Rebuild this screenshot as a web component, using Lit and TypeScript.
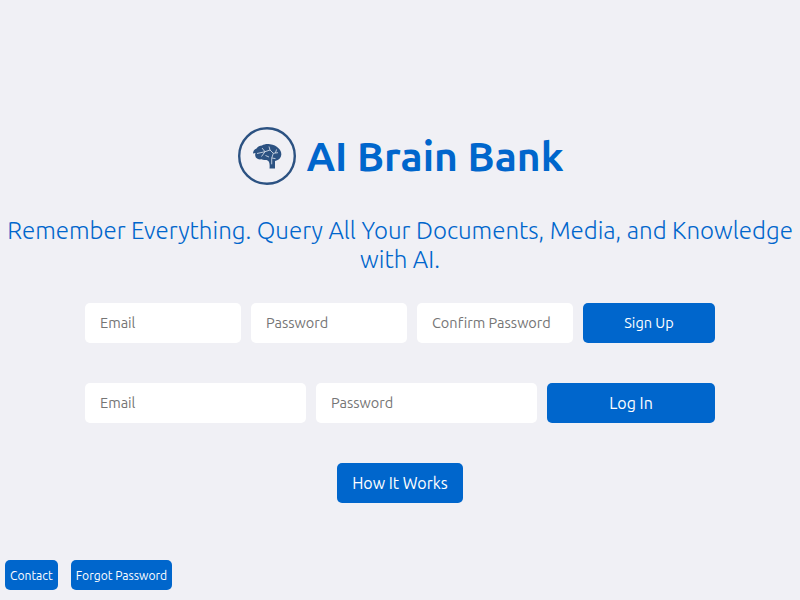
import { LitElement, html, css } from "lit";
import { customElement } from "lit/decorators.js";

@customElement("app-root")
export class AppRoot extends LitElement {
  static styles = css`
    :host {
      display: flex;
      flex-direction: column;
      height: 600px;
      background: #f0f0f5;
      font-family: Ubuntu, "Noto Sans", "Open Sans", sans-serif;
      overflow: hidden;
      font-variant-ligatures: none;
    }
    .main {
      padding-top: 127px;
      display: flex;
      flex-direction: column;
      align-items: center;
    }
    .brand {
      display: flex;
      align-items: center;
      gap: 10px;
      height: 58px;
      margin-left: 2px;
    }
    .logo { width: 58px; height: 58px; display: block; }
    h1 {
      margin: 0;
      font-size: 40.8px;
      font-weight: 700;
      color: #0066cc;
      line-height: 58px;
    }
    .tag {
      margin: 32px 0 0;
      width: 800px;
      text-align: center;
      font-size: 24.1px;
      font-weight: 300;
      line-height: 28.8px;
      color: #0066cc;
    }
    .row {
      display: flex;
      gap: 10px;
      width: 630px;
      margin-top: 40px;
    }
    .row.first { margin-top: 28.4px; }
    input {
      flex: 1 1 0;
      min-width: 0;
      height: 40px;
      box-sizing: border-box;
      border: 0;
      border-radius: 5px;
      background: #fff;
      padding: 0 15px 1px;
      font: inherit;
      font-size: 14.5px;
      outline: none;
    }
    input::placeholder { color: #757575; opacity: 1; }
    button {
      height: 40px;
      border: 0;
      border-radius: 5px;
      background: #0066cc;
      color: #fff;
      font: inherit;
      padding: 0 15px;
    }
    .signup { width: 132px; font-size: 14.5px; }
    .login { width: 168px; font-size: 16px; }
    .how { margin-top: 40px; font-size: 16px; width: 126px; padding: 0; }
    .foot {
      margin-top: auto;
      display: flex;
      gap: 13px;
      padding: 0 0 10px 5px;
    }
    .foot button {
      height: 30px;
      font-size: 12.1px;
      padding: 0 5px;
    }
  `;

  render() {
    return html`
      <div class="main">
        <div class="brand">
          <svg class="logo" viewBox="0 0 58 58" aria-hidden="true">
            <circle cx="29" cy="29" r="27.8" fill="none" stroke="#2c5282" stroke-width="2.4"></circle>
            <path fill="#2c5282" d="M15 26.500c0-2.500 1.500-4.500 3.500-5 1.200-2 3.500-3 5.500-3 2-1.200 5-1.800 8-1.200 3.500.3 6.500 1.700 8.500 4 2 1.800 3 4 2.800 6.500-.2 3-2.300 5-4.800 5.700l-1.500.5v7.500h-5.500c.3-2.500.2-5-.5-6.500-.8-1.400-2-2-3.500-2-1.500.2-2.800 0-4-.7-1.500.3-3 .1-4-.5-1-.6-2-1.200-2-2.300-.4-1-.5-2.200 0-3.500z"></path>
            <path fill="none" stroke="#dfe6f0" stroke-width=".8" stroke-linejoin="round" d="M19 26.500l8-1.800 5-1.700 3.300 3.300-1.600 5v6M24 21l3 3.700M32 23l-1-3.500M35.300 26.300l4.700-.6M37.500 26l1-3.500M23.500 29.500l3.500-4.800M33.700 31l3.800.6M27.500 28.500l3.500 1.500"></path>
          </svg>
          <h1>AI Brain Bank</h1>
        </div>
        <p class="tag">Remember Everything. Query All Your Documents, Media, and Knowledge with AI.</p>
        <div class="row first">
          <input placeholder="Email" />
          <input placeholder="Password" />
          <input placeholder="Confirm Password" />
          <button class="signup">Sign Up</button>
        </div>
        <div class="row">
          <input placeholder="Email" />
          <input placeholder="Password" />
          <button class="login">Log In</button>
        </div>
        <button class="how">How It Works</button>
      </div>
      <div class="foot">
        <button>Contact</button>
        <button>Forgot Password</button>
      </div>
    `;
  }
}
